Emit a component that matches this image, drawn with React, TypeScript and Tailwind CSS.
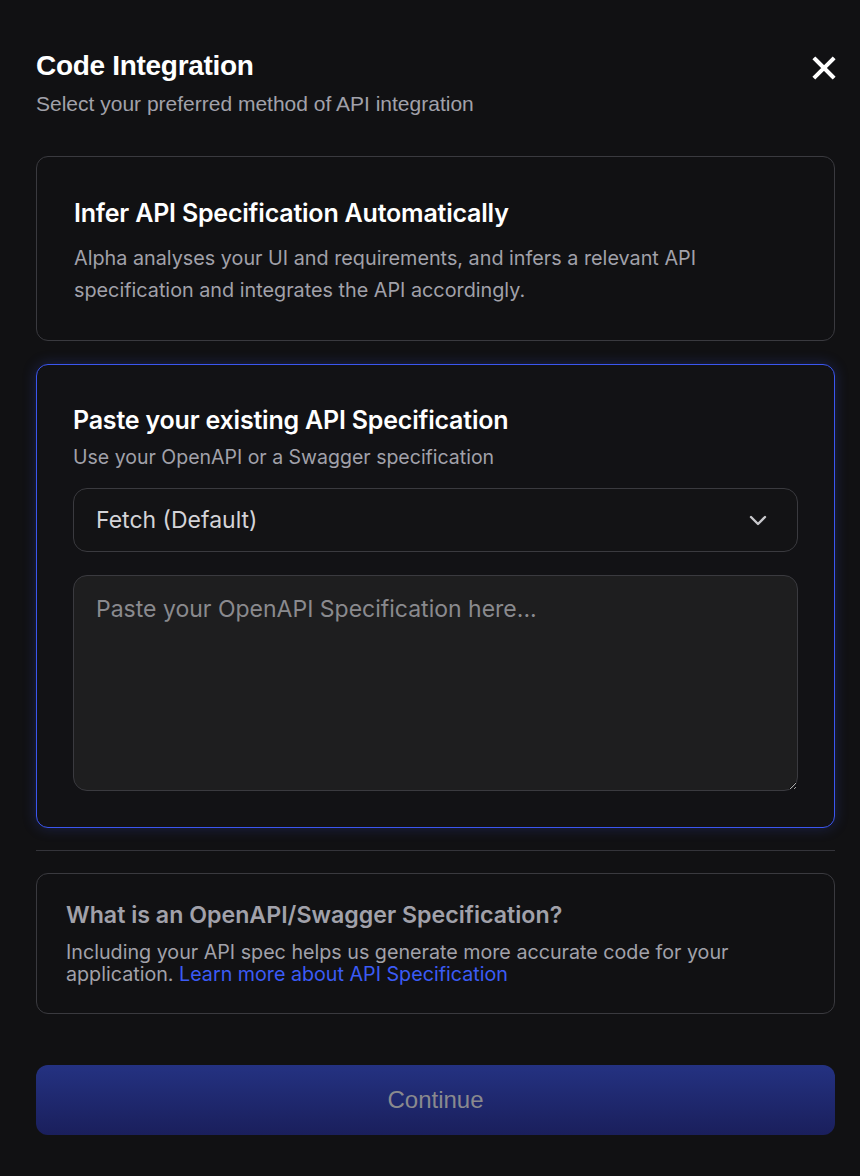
import React from "react";

export default function App() {
  return (
    <div className="min-h-[1176px] w-[860px] bg-[#111113] pt-[49px] pl-[36px] pr-[25px]" style={{ fontFamily: "Inter, 'Liberation Sans', sans-serif" }}>
      <div className="flex items-start justify-between">
        <div>
          <h1 className="text-[28px] leading-[34px] font-bold text-white tracking-[-0.3px]" style={{ fontFamily: "'Liberation Sans', Arial, sans-serif" }}>
            Code Integration
          </h1>
          <p className="mt-[8px] text-[21px] leading-[26px] text-[#a1a1aa]" style={{ fontFamily: "'Liberation Sans', Arial, sans-serif" }}>
            Select your preferred method of API integration
          </p>
        </div>
        <button className="mt-[4px] mr-[-4px] text-white">
          <svg width="30" height="30" viewBox="0 0 24 24" fill="none" stroke="currentColor" strokeWidth="3.2" strokeLinecap="square">
            <path d="M5 5L19 19M19 5L5 19" />
          </svg>
        </button>
      </div>

      <div className="mt-[39px] rounded-[12px] border border-[#3a3a3f] px-[37px] pt-[40px] pb-[34px]">
        <h2 className="text-[25px] leading-[32px] font-semibold text-white tracking-[-0.2px]">Infer API Specification Automatically</h2>
        <p className="mt-[13px] text-[19.8px] leading-[32px] text-[#a1a1aa]">
          Alpha analyses your UI and requirements, and infers a relevant API specification and integrates the API accordingly.
        </p>
      </div>

      <div className="mt-[23px] rounded-[12px] border border-[#3b56f0] bg-[#121215] px-[36px] pt-[39px] pb-[36px] shadow-[0_0_14px_rgba(59,86,240,0.25)]">
        <h2 className="text-[25px] leading-[32px] font-semibold text-white tracking-[-0.2px]">Paste your existing API Specification</h2>
        <p className="mt-[8px] text-[19.5px] leading-[26px] text-[#a1a1aa]">Use your OpenAPI or a Swagger specification</p>
        <div className="mt-[18px] flex h-[64px] items-center justify-between rounded-[14px] border border-[#3a3a3f] bg-[#131315] pl-[22px] pr-[27px]">
          <span className="text-[23px] text-[#d4d4d8]">Fetch (Default)</span>
          <svg width="24" height="24" viewBox="0 0 24 24" fill="none" stroke="#c8c8cc" strokeWidth="2.4" strokeLinecap="round" strokeLinejoin="round">
            <path d="M5 9L12 16L19 9" />
          </svg>
        </div>
        <textarea
          className="mt-[23px] block h-[216px] w-full resize-y rounded-[14px] border border-[#3a3a3f] bg-[#1e1e1f] px-[22px] pt-[18px] text-[23px] leading-[30px] text-[#d4d4d8] outline-none placeholder:text-[#8a8a8e]"
          placeholder="Paste your OpenAPI Specification here..."
        />
      </div>

      <div className="mt-[22px] h-px bg-[#34343a]" />

      <div className="mt-[22px] rounded-[12px] border border-[#3a3a3f] px-[29px] pt-[26px] pb-[28px]">
        <h3 className="text-[23.2px] leading-[30px] font-semibold text-[#a1a1aa]">What is an OpenAPI/Swagger Specification?</h3>
        <p className="mt-[11px] text-[19.7px] leading-[22px] text-[#a1a1aa]">
          Including your API spec helps us generate more accurate code for your application.{" "}
          <a className="text-[#3b5bf6]" href="#">Learn more about API Specification</a>
        </p>
      </div>

      <button
        className="mt-[51px] flex h-[70px] w-full items-center justify-center rounded-[12px] bg-gradient-to-b from-[#243282] to-[#1a1f5c] text-[24px] font-medium text-[#8a8a8e]"
        style={{ fontFamily: "'Liberation Sans', Arial, sans-serif" }}
      >
        Continue
      </button>
    </div>
  );
}
